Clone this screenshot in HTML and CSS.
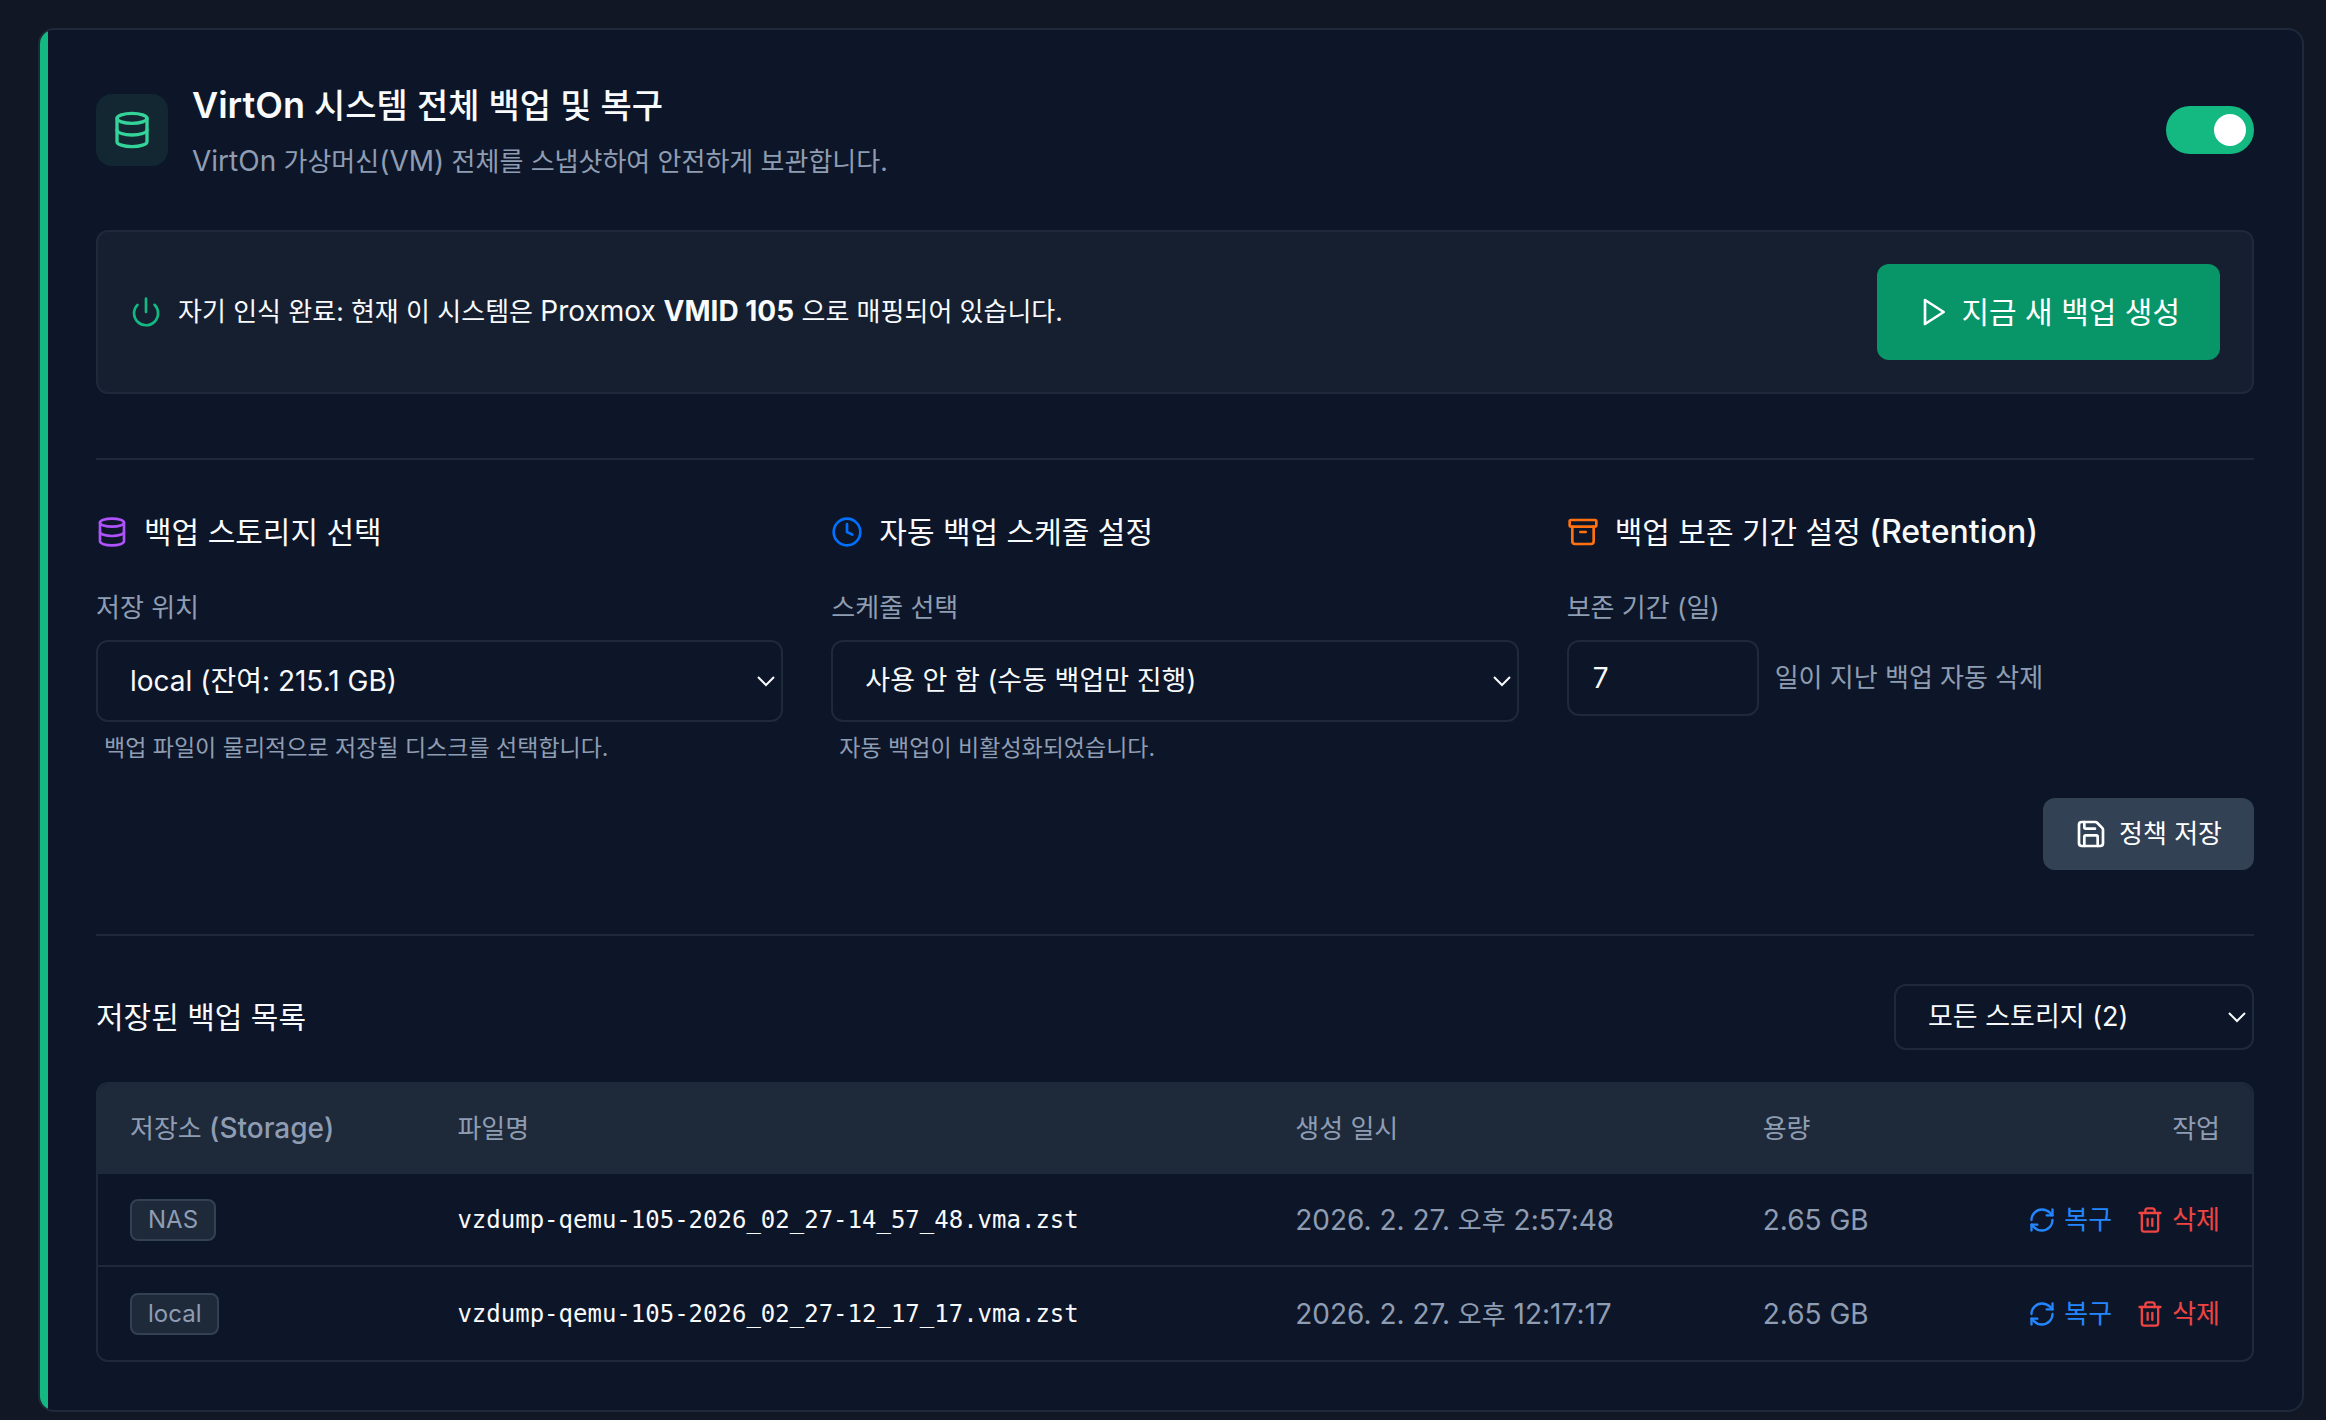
FILE: index.html
```html
<!DOCTYPE html>
<html lang="ko">
<head>
<meta charset="utf-8">
<meta name="viewport" content="width=device-width, initial-scale=1">
<title>VirtOn 백업</title>
<link rel="stylesheet" href="styles.css">
</head>
<body>
<svg class="defs" aria-hidden="true">
  <symbol id="i-database" viewBox="0 0 24 24"><ellipse cx="12" cy="5" rx="9" ry="3"/><path d="M3 5v14a9 3 0 0 0 18 0V5"/><path d="M3 12a9 3 0 0 0 18 0"/></symbol>
  <symbol id="i-power" viewBox="0 0 24 24"><path d="M12 2v10"/><path d="M18.4 6.6a9 9 0 1 1-12.77.04"/></symbol>
  <symbol id="i-play" viewBox="0 0 24 24"><path d="M6 3l14 9-14 9z"/></symbol>
  <symbol id="i-clock" viewBox="0 0 24 24"><circle cx="12" cy="12" r="10"/><path d="M12 6v6l4 2"/></symbol>
  <symbol id="i-archive" viewBox="0 0 24 24"><rect width="20" height="5" x="2" y="3" rx="1"/><path d="M4 8v11a2 2 0 0 0 2 2h12a2 2 0 0 0 2-2V8"/><path d="M10 12h4"/></symbol>
  <symbol id="i-save" viewBox="0 0 24 24"><path d="M15.2 3a2 2 0 0 1 1.4.6l3.8 3.8a2 2 0 0 1 .6 1.4V19a2 2 0 0 1-2 2H5a2 2 0 0 1-2-2V5a2 2 0 0 1 2-2z"/><path d="M17 21v-7a1 1 0 0 0-1-1H8a1 1 0 0 0-1 1v7"/><path d="M7 3v4a1 1 0 0 0 1 1h7"/></symbol>
  <symbol id="i-refresh" viewBox="0 0 24 24"><path d="M3 12a9 9 0 0 1 9-9 9.75 9.75 0 0 1 6.74 2.74L21 8"/><path d="M21 3v5h-5"/><path d="M21 12a9 9 0 0 1-9 9 9.75 9.75 0 0 1-6.74-2.74L3 16"/><path d="M8 16H3v5"/></symbol>
  <symbol id="i-trash" viewBox="0 0 24 24"><path d="M3 6h18"/><path d="M19 6v14a2 2 0 0 1-2 2H7a2 2 0 0 1-2-2V6"/><path d="M8 6V4a2 2 0 0 1 2-2h4a2 2 0 0 1 2 2v2"/><path d="M10 11v6M14 11v6"/></symbol>
  <symbol id="i-chevron" viewBox="0 0 18 12"><path d="M1 2l8 8 8-8"/></symbol>
</svg>

<main class="card">
  <header class="card-header">
    <span class="tile"><svg class="icon icon-lg"><use href="#i-database"/></svg></span>
    <div class="card-heading">
      <h1 class="title"><span class="latin">VirtOn</span> 시스템 전체 백업 및 복구</h1>
      <p class="subtitle"><span class="latin">VirtOn</span> 가상머신<span class="latin">(VM)</span> 전체를 스냅샷하여 안전하게 보관합니다.</p>
    </div>
    <input class="switch" type="checkbox" role="switch" aria-label="백업 사용" checked>
  </header>

  <section class="status">
    <svg class="icon power"><use href="#i-power"/></svg>
    <p class="status-text">자기 인식 완료: 현재 이 시스템은 <span class="latin">Proxmox <strong>VMID 105</strong></span> 으로 매핑되어 있습니다.</p>
    <button class="btn btn-primary" type="button"><svg class="icon"><use href="#i-play"/></svg>지금 새 백업 생성</button>
  </section>

  <form class="policy">
    <div class="columns">
      <section>
        <h2 class="section-title"><svg class="icon purple"><use href="#i-database"/></svg>백업 스토리지 선택</h2>
        <label class="label" for="storage">저장 위치</label>
        <div class="select">
          <select id="storage"><option>local (잔여: 215.1 GB)</option></select>
          <svg class="chevron"><use href="#i-chevron"/></svg>
        </div>
        <p class="hint">백업 파일이 물리적으로 저장될 디스크를 선택합니다.</p>
      </section>
      <section>
        <h2 class="section-title"><svg class="icon blue"><use href="#i-clock"/></svg>자동 백업 스케줄 설정</h2>
        <label class="label" for="schedule">스케줄 선택</label>
        <div class="select">
          <select id="schedule" class="hangul"><option>사용 안 함 (수동 백업만 진행)</option></select>
          <svg class="chevron"><use href="#i-chevron"/></svg>
        </div>
        <p class="hint">자동 백업이 비활성화되었습니다.</p>
      </section>
      <section>
        <h2 class="section-title"><svg class="icon orange"><use href="#i-archive"/></svg><span>백업 보존 기간 설정 <span class="latin">(Retention)</span></span></h2>
        <label class="label" for="days">보존 기간 (일)</label>
        <div class="days">
          <input id="days" type="text" inputmode="numeric" value="7">
          <span>일이 지난 백업 자동 삭제</span>
        </div>
      </section>
    </div>
    <button class="btn btn-secondary" type="button"><svg class="icon"><use href="#i-save"/></svg>정책 저장</button>
  </form>

  <section class="backups">
    <div class="backups-header">
      <h2 class="section-title">저장된 백업 목록</h2>
      <div class="select select-sm">
        <select class="hangul" aria-label="스토리지 필터"><option>모든 스토리지 (2)</option></select>
        <svg class="chevron"><use href="#i-chevron"/></svg>
      </div>
    </div>
    <div class="table-wrap">
      <table>
        <colgroup><col class="c-storage"><col class="c-file"><col class="c-date"><col class="c-size"><col></colgroup>
        <thead>
          <tr><th>저장소 <span class="latin">(Storage)</span></th><th>파일명</th><th>생성 일시</th><th>용량</th><th class="end">작업</th></tr>
        </thead>
        <tbody>
          <tr>
            <td><span class="badge">NAS</span></td>
            <td class="file">vzdump-qemu-105-2026_02_27-14_57_48.vma.zst</td>
            <td>2026. 2. 27. <span class="ko">오후</span> 2:57:48</td>
            <td>2.65 GB</td>
            <td><div class="actions"><button class="link restore" type="button"><svg class="icon"><use href="#i-refresh"/></svg>복구</button><button class="link delete" type="button"><svg class="icon"><use href="#i-trash"/></svg>삭제</button></div></td>
          </tr>
          <tr>
            <td><span class="badge">local</span></td>
            <td class="file">vzdump-qemu-105-2026_02_27-12_17_17.vma.zst</td>
            <td>2026. 2. 27. <span class="ko">오후</span> 12:17:17</td>
            <td>2.65 GB</td>
            <td><div class="actions"><button class="link restore" type="button"><svg class="icon"><use href="#i-refresh"/></svg>복구</button><button class="link delete" type="button"><svg class="icon"><use href="#i-trash"/></svg>삭제</button></div></td>
          </tr>
        </tbody>
      </table>
    </div>
  </section>
</main>
</body>
</html>
```

FILE: styles.css
```css
:root {
  --page: #111725;
  --card: #0d1628;
  --line: #1e293a;
  --text: #f8fafc;
  --muted: #8f9db3;
  --green: #14b981;
  --mono: "DejaVu Sans Mono", monospace;
}

* { box-sizing: border-box; }

body {
  margin: 0;
  padding: 28px 22px 8px 38px;
  background: var(--page);
  color: var(--text);
  font: 400 26px/40px Inter, "Noto Sans CJK KR", sans-serif;
}

h1, h2, p { margin: 0; }
button, input, select { font: inherit; color: inherit; }
.defs { display: none; }

.icon {
  flex: none;
  width: 32px;
  height: 32px;
  fill: none;
  stroke: currentColor;
  stroke-width: 2;
  stroke-linecap: round;
  stroke-linejoin: round;
}

.latin { font-size: 28px; line-height: 1; }

.card {
  position: relative;
  padding: 48px 48px 48px 56px;
  overflow: hidden;
  background: var(--card);
  border: 2px solid var(--line);
  border-radius: 16px;
}

.card::before {
  content: "";
  position: absolute;
  inset: 0 auto 0 0;
  width: 8px;
  background: var(--green);
}

.card-header { display: flex; align-items: center; gap: 24px; }
.card-heading { flex: 1; }

.tile {
  display: grid;
  place-items: center;
  width: 72px;
  height: 72px;
  border-radius: 16px;
  background: #132733;
  color: #34d399;
}
.icon-lg { width: 40px; height: 40px; }

.title { font-size: 34px; line-height: 56px; font-weight: 500; }
.title .latin { font-size: 36px; font-weight: 600; }
.subtitle { line-height: 40px; margin-top: 8px; color: var(--muted); }

.switch {
  appearance: none;
  display: flex;
  align-items: center;
  justify-content: flex-end;
  width: 88px;
  height: 48px;
  margin: 0;
  padding: 8px;
  border-radius: 24px;
  background: var(--green);
}
.switch::before {
  content: "";
  width: 32px;
  height: 32px;
  border-radius: 50%;
  background: #fff;
}

.status {
  display: flex;
  align-items: center;
  gap: 16px;
  margin-top: 48px;
  padding: 32px;
  border: 2px solid var(--line);
  border-radius: 12px;
  background: #161f30;
}
.status-text { flex: 1; }
.power { color: var(--green); }

.btn {
  display: flex;
  align-items: center;
  border: 0;
  border-radius: 12px;
  color: #fff;
}
.btn-primary { gap: 12px; height: 96px; padding: 0 40px; font-size: 30px; background: #089669; }
.btn-secondary { gap: 12px; height: 72px; padding: 0 32px; background: #334155; }

.policy {
  display: flex;
  flex-direction: column;
  align-items: flex-end;
  gap: 32px;
  margin-top: 64px;
  padding-top: 48px;
  border-top: 2px solid var(--line);
}
.columns {
  display: grid;
  grid-template-columns: repeat(3, minmax(0, 1fr));
  gap: 48px;
  width: 100%;
}

.section-title {
  display: flex;
  align-items: center;
  gap: 16px;
  font-size: 30px;
  line-height: 48px;
  font-weight: 400;
}
.section-title .latin { font-size: 32px; font-weight: 500; }
.purple { color: #ae52fb; }
.blue { color: #0070ff; }
.orange { color: #ff7010; }

.label { display: block; margin: 32px 0 12px; color: var(--muted); }
.hint { margin-top: 8px; padding-left: 8px; font-size: 23px; line-height: 36px; color: var(--muted); }

.select { position: relative; }
.select select {
  appearance: none;
  display: block;
  width: 100%;
  height: 82px;
  padding: 0 48px 0 32px;
  border: 2px solid var(--line);
  border-radius: 12px;
  background: transparent;
  font-size: 28px;
}
.select .hangul { font-size: 27px; }
.chevron {
  position: absolute;
  right: 8px;
  top: 50%;
  width: 18px;
  height: 12px;
  margin-top: -6px;
  fill: none;
  stroke: currentColor;
  stroke-width: 2;
  pointer-events: none;
}
.select-sm { width: 360px; }
.select-sm select { height: 66px; }

.days { display: flex; align-items: center; gap: 16px; color: var(--muted); }
.days input {
  width: 192px;
  height: 76px;
  padding: 0 24px;
  border: 2px solid var(--line);
  border-radius: 12px;
  background: transparent;
  color: var(--text);
  font-size: 28px;
}

.backups { margin-top: 64px; padding-top: 48px; border-top: 2px solid var(--line); }
.backups-header { display: flex; align-items: center; justify-content: space-between; }

.table-wrap { margin-top: 32px; border: 2px solid var(--line); border-radius: 12px; overflow: hidden; }
table { width: 100%; table-layout: fixed; border-collapse: collapse; color: var(--muted); }
.c-storage { width: 15.2%; }
.c-file { width: 38.9%; }
.c-date { width: 21.7%; }
.c-size { width: 10%; }
th, td { padding: 0 32px; text-align: left; white-space: nowrap; }
th { height: 90px; background: #1e293a; font-weight: 400; }
th .latin { font-weight: 500; }
td { height: 92px; font-size: 28px; }
tbody tr + tr td { height: 94px; border-top: 2px solid var(--line); }
.end { text-align: right; }
.ko { font-size: 26px; line-height: 1; }
.file { color: var(--text); font: 24px/40px var(--mono); }

.badge {
  display: inline-block;
  padding: 0 16px;
  border: 2px solid #334155;
  border-radius: 8px;
  background: #1e293a;
  font-size: 24px;
  line-height: 38px;
  vertical-align: middle;
}

.actions { display: flex; justify-content: flex-end; gap: 24px; }
.link {
  display: flex;
  align-items: center;
  gap: 8px;
  padding: 0;
  border: 0;
  background: none;
  font-size: 26px;
}
.link .icon { width: 28px; height: 28px; }
.restore { color: #2486ff; }
.delete { color: #ef4444; }
```
